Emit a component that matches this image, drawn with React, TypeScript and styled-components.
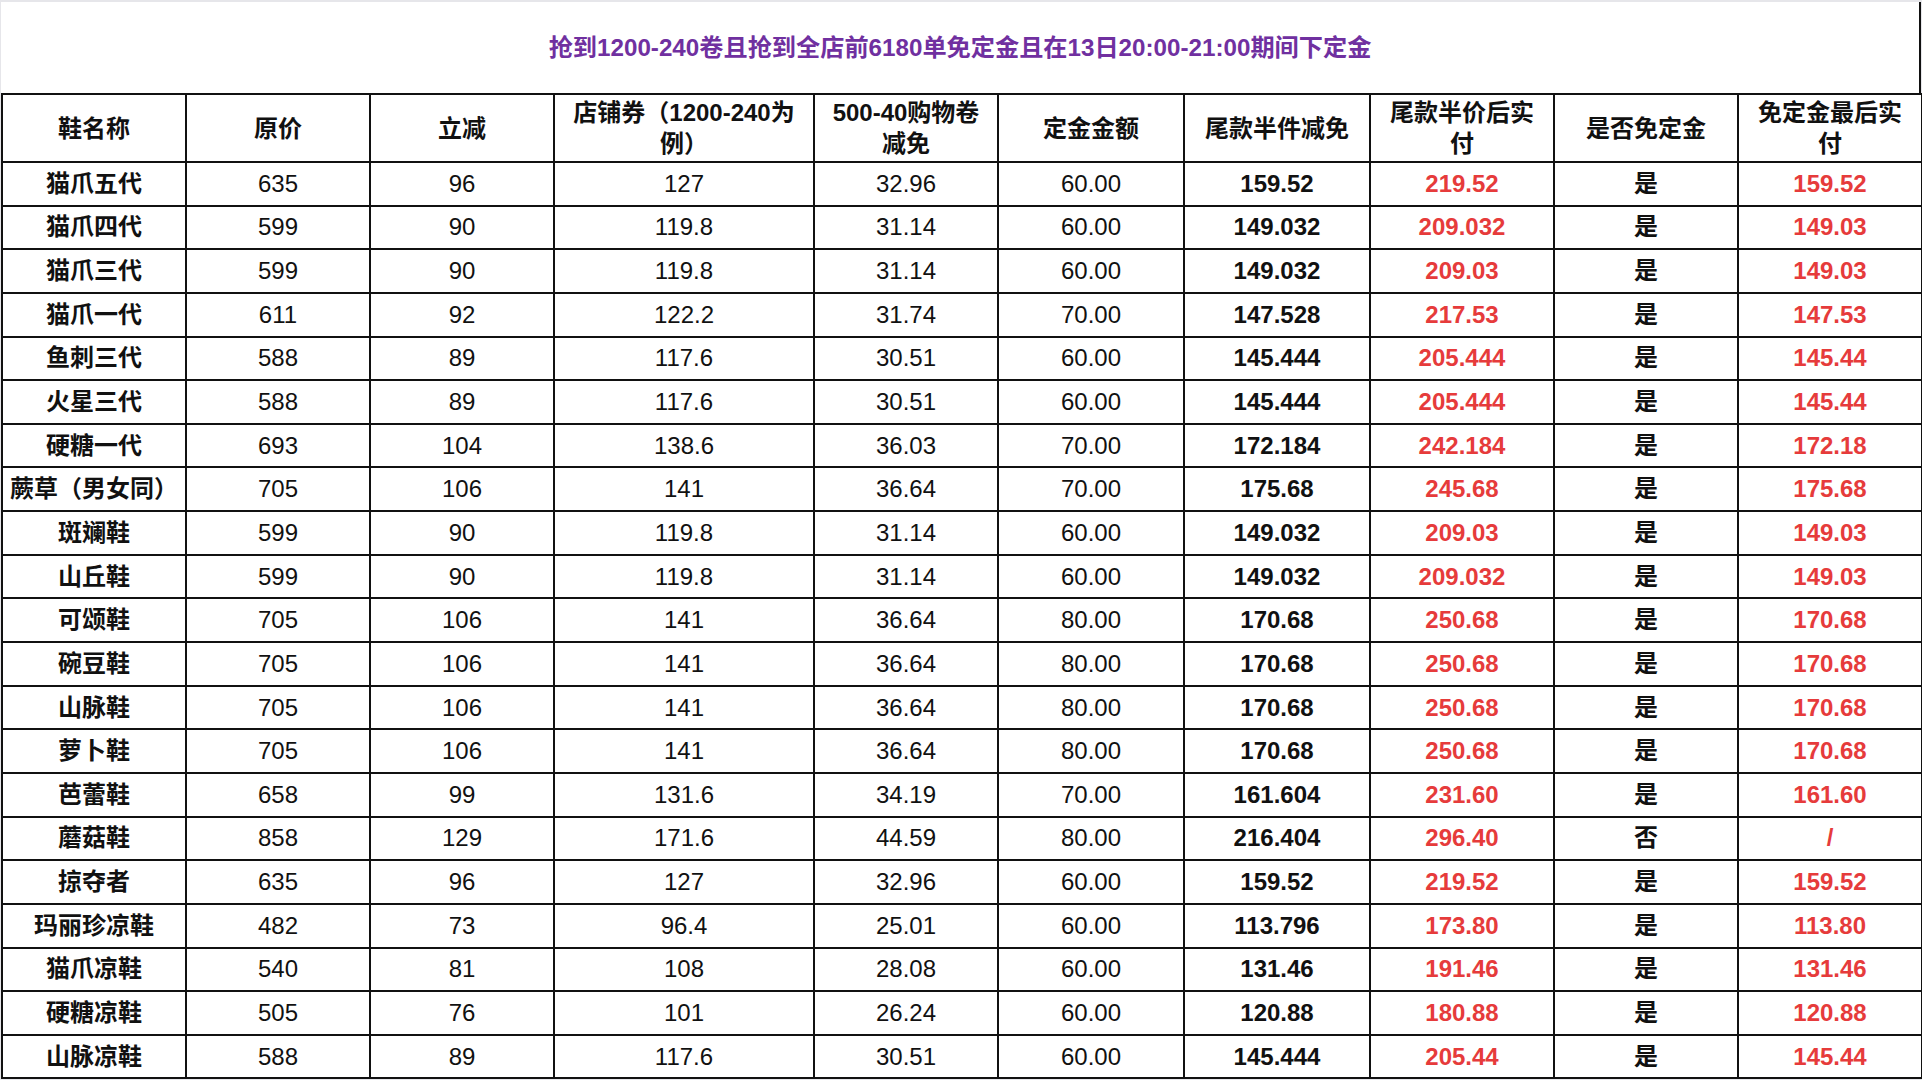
import React from 'react'
import styled, { createGlobalStyle } from 'styled-components'

const GlobalStyle = createGlobalStyle`
  html, body {
    margin: 0;
    padding: 0;
    background: #e6e6ea;
  }
  body {
    font-family: "Liberation Sans", "Noto Sans CJK SC", sans-serif;
  }
`

type Row = {
  name: string
  price: string
  cut: string
  coupon: string
  shop: string
  deposit: string
  half: string
  pay: string
  free: string
  last: string
}

const rows: Row[] = [
  { name: '猫爪五代', price: '635', cut: '96', coupon: '127', shop: '32.96', deposit: '60.00', half: '159.52', pay: '219.52', free: '是', last: '159.52' },
  { name: '猫爪四代', price: '599', cut: '90', coupon: '119.8', shop: '31.14', deposit: '60.00', half: '149.032', pay: '209.032', free: '是', last: '149.03' },
  { name: '猫爪三代', price: '599', cut: '90', coupon: '119.8', shop: '31.14', deposit: '60.00', half: '149.032', pay: '209.03', free: '是', last: '149.03' },
  { name: '猫爪一代', price: '611', cut: '92', coupon: '122.2', shop: '31.74', deposit: '70.00', half: '147.528', pay: '217.53', free: '是', last: '147.53' },
  { name: '鱼刺三代', price: '588', cut: '89', coupon: '117.6', shop: '30.51', deposit: '60.00', half: '145.444', pay: '205.444', free: '是', last: '145.44' },
  { name: '火星三代', price: '588', cut: '89', coupon: '117.6', shop: '30.51', deposit: '60.00', half: '145.444', pay: '205.444', free: '是', last: '145.44' },
  { name: '硬糖一代', price: '693', cut: '104', coupon: '138.6', shop: '36.03', deposit: '70.00', half: '172.184', pay: '242.184', free: '是', last: '172.18' },
  { name: '蕨草（男女同）', price: '705', cut: '106', coupon: '141', shop: '36.64', deposit: '70.00', half: '175.68', pay: '245.68', free: '是', last: '175.68' },
  { name: '斑斓鞋', price: '599', cut: '90', coupon: '119.8', shop: '31.14', deposit: '60.00', half: '149.032', pay: '209.03', free: '是', last: '149.03' },
  { name: '山丘鞋', price: '599', cut: '90', coupon: '119.8', shop: '31.14', deposit: '60.00', half: '149.032', pay: '209.032', free: '是', last: '149.03' },
  { name: '可颂鞋', price: '705', cut: '106', coupon: '141', shop: '36.64', deposit: '80.00', half: '170.68', pay: '250.68', free: '是', last: '170.68' },
  { name: '碗豆鞋', price: '705', cut: '106', coupon: '141', shop: '36.64', deposit: '80.00', half: '170.68', pay: '250.68', free: '是', last: '170.68' },
  { name: '山脉鞋', price: '705', cut: '106', coupon: '141', shop: '36.64', deposit: '80.00', half: '170.68', pay: '250.68', free: '是', last: '170.68' },
  { name: '萝卜鞋', price: '705', cut: '106', coupon: '141', shop: '36.64', deposit: '80.00', half: '170.68', pay: '250.68', free: '是', last: '170.68' },
  { name: '芭蕾鞋', price: '658', cut: '99', coupon: '131.6', shop: '34.19', deposit: '70.00', half: '161.604', pay: '231.60', free: '是', last: '161.60' },
  { name: '蘑菇鞋', price: '858', cut: '129', coupon: '171.6', shop: '44.59', deposit: '80.00', half: '216.404', pay: '296.40', free: '否', last: '/' },
  { name: '掠夺者', price: '635', cut: '96', coupon: '127', shop: '32.96', deposit: '60.00', half: '159.52', pay: '219.52', free: '是', last: '159.52' },
  { name: '玛丽珍凉鞋', price: '482', cut: '73', coupon: '96.4', shop: '25.01', deposit: '60.00', half: '113.796', pay: '173.80', free: '是', last: '113.80' },
  { name: '猫爪凉鞋', price: '540', cut: '81', coupon: '108', shop: '28.08', deposit: '60.00', half: '131.46', pay: '191.46', free: '是', last: '131.46' },
  { name: '硬糖凉鞋', price: '505', cut: '76', coupon: '101', shop: '26.24', deposit: '60.00', half: '120.88', pay: '180.88', free: '是', last: '120.88' },
  { name: '山脉凉鞋', price: '588', cut: '89', coupon: '117.6', shop: '30.51', deposit: '60.00', half: '145.444', pay: '205.44', free: '是', last: '145.44' },
]

const heads = [
  '鞋名称',
  '原价',
  '立减',
  '店铺券（1200-240为例）',
  '500-40购物卷减免',
  '定金金额',
  '尾款半件减免',
  '尾款半价后实付',
  '是否免定金',
  '免定金最后实付',
]

const widths = [184, 184, 184, 260, 184, 186, 186, 184, 184, 184]

const App = () => {
  return (
    <StPage>
      <GlobalStyle />
      <StSheet>
        {/* // Title */}
        <StTitleBar>
          <StTitle>抢到1200-240卷且抢到全店前6180单免定金且在13日20:00-21:00期间下定金</StTitle>
        </StTitleBar>

        {/* // Table */}
        <StTable>
          <colgroup>
            {widths.map((w, i) => (
              <col key={i} style={{ width: w }} />
            ))}
          </colgroup>
          <thead>
            <StHeadRow>
              {heads.map((h) => (
                <StHeadCell key={h}>{h}</StHeadCell>
              ))}
            </StHeadRow>
          </thead>
          <tbody>
            {rows.map((r) => (
              <StRow key={r.name}>
                <StCell $bold>{r.name}</StCell>
                <StCell>{r.price}</StCell>
                <StCell>{r.cut}</StCell>
                <StCell>{r.coupon}</StCell>
                <StCell>{r.shop}</StCell>
                <StCell>{r.deposit}</StCell>
                <StCell $bold>{r.half}</StCell>
                <StCell $bold $red>{r.pay}</StCell>
                <StCell $bold>{r.free}</StCell>
                <StCell $bold $red>{r.last}</StCell>
              </StRow>
            ))}
          </tbody>
        </StTable>
      </StSheet>
    </StPage>
  )
}

// Wrapper
const StPage = styled.div`
  padding: 2px 0 0 1px;
  width: 1921px;
  height: 1078px;
  overflow: hidden;
`
const StSheet = styled.div`
  background: #ffffff;
  width: 1920px;
`

// Title
const StTitleBar = styled.div`
  height: 91px;
  display: flex;
  align-items: center;
  justify-content: center;
  border-right: 2px solid #111;
  box-sizing: border-box;
`
const StTitle = styled.span`
  color: #7030a0;
  font-size: 24.2px;
  font-weight: 700;
  line-height: 30px;
`

// Table
const StTable = styled.table`
  width: 1920px;
  table-layout: fixed;
  border-collapse: collapse;
  border: 2px solid #111;
`
const StHeadRow = styled.tr`
  height: 68px;
`
const StHeadCell = styled.th`
  border: 2px solid #111;
  padding: 0 12px;
  font-size: 24px;
  font-weight: 700;
  line-height: 31px;
  color: #111;
  text-align: center;
  vertical-align: middle;
`
const StRow = styled.tr`
  height: 43.65px;
`
const StCell = styled.td<{ $bold?: boolean; $red?: boolean }>`
  border: 2px solid #111;
  padding: 0 2px;
  font-size: 24px;
  line-height: 28px;
  white-space: nowrap;
  text-align: center;
  vertical-align: middle;
  font-weight: ${(p) => (p.$bold ? 700 : 400)};
  color: ${(p) => (p.$red ? '#e63b3b' : '#111')};
`

export default App
